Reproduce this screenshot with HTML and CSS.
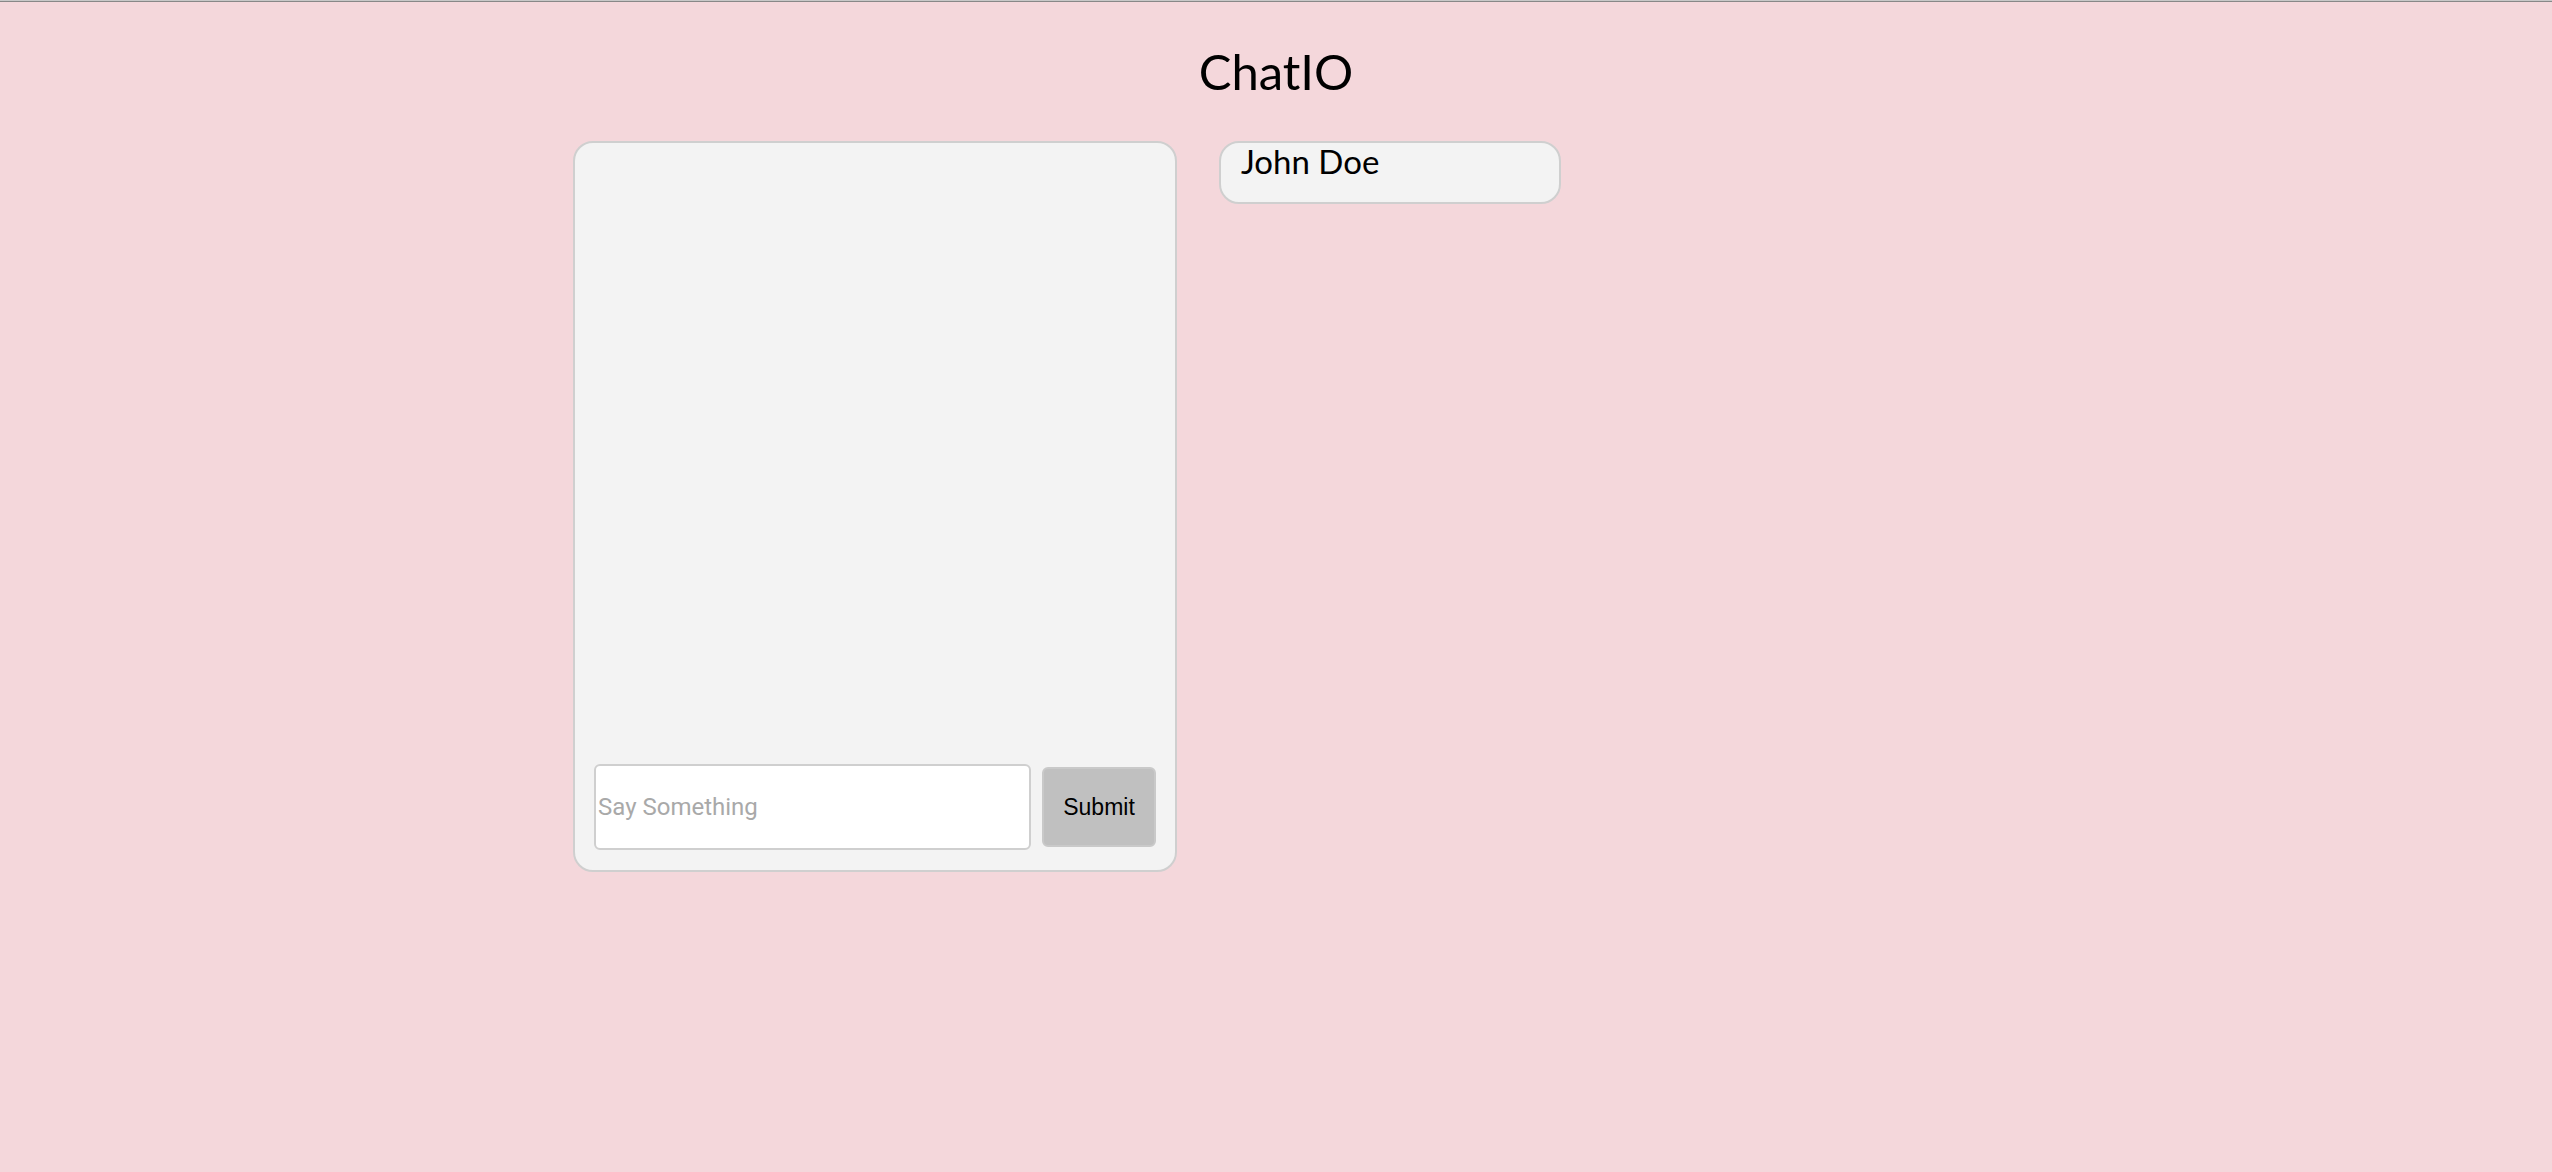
FILE: index.html
```html
<!DOCTYPE html>
<html lang="en">
<head>
<meta charset="utf-8">
<title>ChatIO</title>
<link rel="stylesheet" href="styles.css">
</head>
<body>
  <h1 class="title">ChatIO</h1>
  <main class="layout">
    <section class="chat">
      <div class="messages"></div>
      <form class="composer">
        <input class="composer-input" type="text" placeholder="Say Something">
        <button class="composer-btn" type="button">Submit</button>
      </form>
    </section>
    <aside class="users">
      <div class="user">John Doe</div>
    </aside>
  </main>
</body>
</html>
```

FILE: styles.css
```css
* { box-sizing: border-box; }
html, body { margin: 0; padding: 0; }
body {
  background: #f4d7db;
  border-top: 1px solid #c8c8c8;
  box-shadow: inset 0 1px 0 #888;
  min-height: 1172px;
  font-family: "Lato", "Noto Sans", sans-serif;
  color: #000;
}
.title {
  margin: 0;
  padding-top: 40px;
  height: 140px;
  text-align: center;
  font-family: "Lato", sans-serif;
  font-weight: 400;
  font-size: 49px;
  line-height: 60px;
}
.layout {
  display: flex;
  align-items: flex-start;
  gap: 42px;
  padding-left: 573px;
}
.chat {
  width: 604px;
  height: 731px;
  background: #f3f3f3;
  border: 2px solid #cfcfcf;
  border-radius: 20px;
  display: flex;
  flex-direction: column;
  justify-content: flex-end;
  padding: 0 19px 20px 19px;
}
.messages { flex: 1; }
.composer {
  display: flex;
  align-items: center;
  gap: 11px;
  margin: 0;
}
.composer-input {
  flex: 1;
  min-width: 0;
  height: 86px;
  background: #fff;
  border: 2px solid #cfcfcf;
  border-radius: 6px;
  padding: 0 2px;
  font-family: "Roboto", "Liberation Sans", sans-serif;
  font-size: 24px;
  outline: none;
}
.composer-input::placeholder { color: #a9a9a9; }
.composer-btn {
  width: 114px;
  height: 80px;
  flex: none;
  background: #c0c0c0;
  border: 2px solid #c9c9c9;
  border-radius: 6px;
  font-family: "Liberation Sans", "Helvetica", sans-serif;
  font-size: 23px;
  color: #000;
  padding: 0;
}
.users { width: 342px; }
.user {
  height: 63px;
  background: #f3f3f3;
  border: 2px solid #cfcfcf;
  border-radius: 20px;
  padding: 0 20px;
  font-family: "Lato", "Noto Sans", sans-serif;
  font-size: 33px;
  line-height: 36px;
}
```
